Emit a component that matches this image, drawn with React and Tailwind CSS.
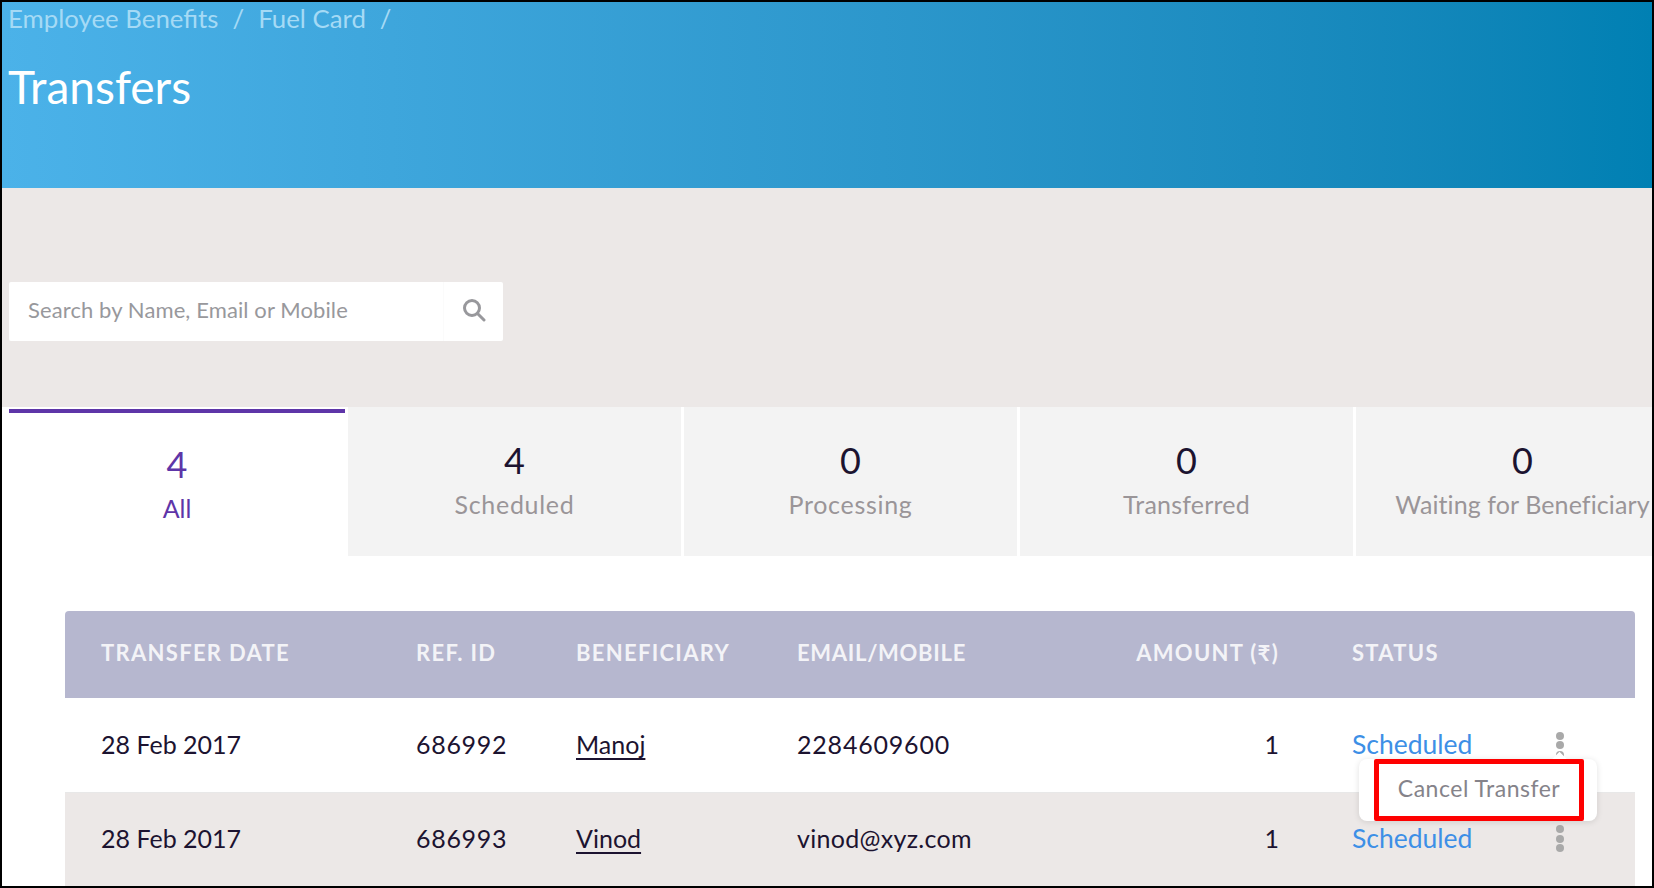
import React from 'react';

const tabs = [
  { count: 4, label: 'Scheduled', spacing: 'tracking-[0.7px]' },
  { count: 0, label: 'Processing', spacing: 'tracking-[0.7px]' },
  { count: 0, label: 'Transferred', spacing: 'tracking-[0.2px]' },
  { count: 0, label: 'Waiting for Beneficiary', spacing: 'tracking-[0.1px]' },
];

const rows = [
  { date: '28 Feb 2017', ref: '686992', name: 'Manoj', contact: '2284609600', spacing: 'tracking-[0.8px]', amount: 1, status: 'Scheduled' },
  { date: '28 Feb 2017', ref: '686993', name: 'Vinod', contact: 'vinod@xyz.com', spacing: 'tracking-[0.3px]', amount: 1, status: 'Scheduled' },
];

const gridCols = 'grid grid-cols-[315px_160px_221px_360px_122px_1fr] pl-[36px] items-center';

const Dots = () => (
  <div className="flex flex-col gap-[1.5px]">
    <span className="w-[8px] h-[8px] rounded-full bg-[#a9a9a9]" />
    <span className="w-[8px] h-[8px] rounded-full bg-[#a9a9a9]" />
    <span className="w-[8px] h-[8px] rounded-full bg-[#a9a9a9]" />
  </div>
);

const App = () => {
  return (
    <div className="w-[1654px] h-[888px] overflow-hidden border-2 border-black bg-white font-['Lato','Open_Sans',sans-serif] text-[#1c1330]">
      {/* Header */}
      <header className="h-[186px] pl-[6px] bg-gradient-to-r from-[#4bb2e9] to-[#0080b3] text-white">
        <nav className="flex items-center h-[34px] text-[25.8px] leading-none text-[#a5daf5]">
          <span>Employee Benefits</span>
          <span className="mx-[14px]">/</span>
          <span>Fuel Card</span>
          <span className="mx-[14px]">/</span>
        </nav>
        <h1 className="mt-[24px] text-[46px] leading-[54px]">Transfers</h1>
      </header>

      {/* Search */}
      <div className="h-[219px] bg-[#ece8e7] pt-[94px] pl-[7px]">
        <div className="flex w-[494px] h-[59px] rounded-[2px] bg-white">
          <span className="flex-1 flex items-center pl-[19px] pb-[4px] text-[22px] tracking-[0.1px] text-[#98989c]">
            Search by Name, Email or Mobile
          </span>
          <span className="w-[60px] pb-[3px] flex items-center justify-center border-l border-[#fbfbfb]">
            <svg width="24" height="24" viewBox="0 0 24 24" fill="none" stroke="#98989c" strokeWidth="3" strokeLinecap="round">
              <circle cx="10" cy="10" r="7.5" />
              <path d="M15.5 15.5 22 22" />
            </svg>
          </span>
        </div>
      </div>

      {/* Status tabs */}
      <div className="flex h-[149px] pl-[7px] gap-[3px]">
        <div className="w-[336px] shrink-0 pt-[2px]">
          <div className="h-[4px] bg-[#5e35a8]" />
          <div className="flex flex-col items-center text-[#5e35a8]">
            <span className="mt-[29px] text-[36px] leading-[44px]">4</span>
            <span className="mt-[7px] text-[25px] leading-[30px]">All</span>
          </div>
        </div>
        {tabs.map((tab) => (
          <div key={tab.label} className="w-[333px] shrink-0 bg-[#f3f3f3] flex flex-col items-center">
            <span className="mt-[31px] text-[36px] leading-[44px]">{tab.count}</span>
            <span className={`mt-[7px] text-[25px] leading-[30px] text-[#9a9598] whitespace-nowrap ${tab.spacing}`}>{tab.label}</span>
          </div>
        ))}
      </div>

      {/* Transfers table */}
      <div className="relative mt-[55px] ml-[63px] w-[1570px]">
        <div className={`${gridCols} h-[87px] pb-[5px] rounded-t-[4px] bg-[#b6b7cf] text-[22px] font-bold tracking-[1.3px] text-[#f3f3f7]`}>
          <span>TRANSFER DATE</span>
          <span>REF. ID</span>
          <span className="whitespace-nowrap">BENEFICIARY</span>
          <span className="tracking-[0.7px]">EMAIL/MOBILE</span>
          <span className="justify-self-end whitespace-nowrap">AMOUNT (₹)</span>
          <span className="pl-[73px]">STATUS</span>
        </div>
        {rows.map((row, idx) => (
          <div
            key={row.ref}
            className={`${gridCols} h-[95px] text-[25px] ${idx % 2 === 1 ? 'bg-[#ece8e7] pb-[4px]' : 'bg-white border-b border-[#e8e8e8]'}`}
          >
            <span>{row.date}</span>
            <span className="tracking-[0.7px]">{row.ref}</span>
            <span><a href="#" className="underline underline-offset-4">{row.name}</a></span>
            <span className={row.spacing}>{row.contact}</span>
            <span className="text-right">{row.amount}</span>
            <div className="flex items-center pl-[73px]">
              <span className="w-[204px] text-[26.5px] text-[#3d8fe6]">{row.status}</span>
              <Dots />
            </div>
          </div>
        ))}

        {/* Row action menu */}
        <div className="absolute top-[148px] right-[38px] pl-[15px] pr-[13px] rounded-[8px] bg-white shadow-[0_1px_6px_rgba(0,0,0,0.12)]">
          <span className="absolute -top-[5px] right-[32px] w-[11px] h-[11px] rotate-45 bg-white" />
          <div className="relative flex items-center justify-center w-[210px] h-[62px] pb-[4px] rounded-[2px] border-[5px] border-[#fe0000] bg-white text-[23px] tracking-[0.5px] text-[#85838a]">
            Cancel Transfer
          </div>
        </div>
      </div>
    </div>
  );
};

export default App;
